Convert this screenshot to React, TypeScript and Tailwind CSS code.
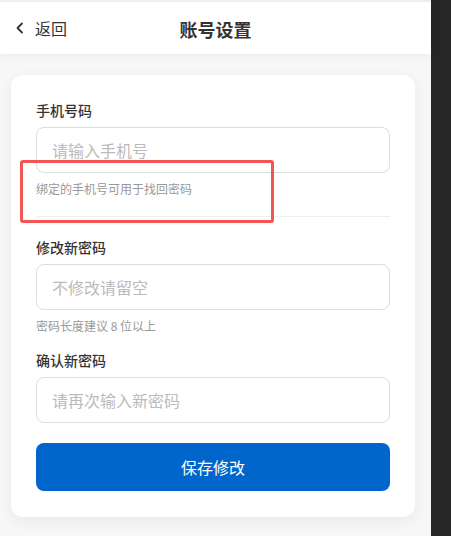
export default function App() {
    const font = { fontFamily: '"Noto Sans CJK SC", "Noto Sans", sans-serif' };

    return (
        <div className="flex h-[536px] w-[451px] overflow-hidden" style={font}>
            {/* 主区域 */}
            <div className="relative flex w-[431px] flex-col bg-[#f7f7f7]">
                {/* 顶栏 */}
                <div className="relative z-10 flex h-[54px] items-center border-t-2 border-[#eeeeee] bg-white shadow-[0_2px_8px_rgba(0,0,0,0.05)]">
                    <div className="flex items-center pl-[14px] text-[16px] text-[#333]">
                        <svg width="12" height="14" viewBox="0 0 12 14" fill="none" className="mr-[9px]">
                            <path d="M8 2.5L3.5 7L8 11.5" stroke="#333" strokeWidth="1.8" strokeLinecap="round" strokeLinejoin="round" />
                        </svg>
                        返回
                    </div>
                    <div className="absolute left-0 right-0 top-[14px] text-center text-[18px] font-bold text-[#333] pointer-events-none">
                        账号设置
                    </div>
                </div>

                {/* 表单卡片 */}
                <div className="ml-[11px] mt-[21px] w-[404px] rounded-[12px] bg-white px-[25px] pb-[26px] pt-[24px] shadow-[0_4px_16px_rgba(0,0,0,0.06)]">
                    <div className="text-[14px] font-medium leading-[22px] text-[#333]">手机号码</div>
                    <input
                        placeholder="请输入手机号"
                        className="mt-[6px] h-[46px] w-full rounded-[8px] border border-[#dddddd] px-[15px] text-[16px] placeholder:text-[#bbbbbb] outline-none"
                    />
                    <div className="mt-[7px] text-[12px] leading-[17px] text-[#999]">绑定的手机号可用于找回密码</div>
                    <div className="mt-[19px] h-px bg-[#eeeeee]" />

                    <div className="mt-[19px] text-[14px] font-medium leading-[22px] text-[#333]">修改新密码</div>
                    <input
                        placeholder="不修改请留空"
                        className="mt-[6px] h-[46px] w-full rounded-[8px] border border-[#dddddd] px-[15px] text-[16px] placeholder:text-[#bbbbbb] outline-none"
                    />
                    <div className="mt-[7px] text-[12px] leading-[17px] text-[#999]">密码长度建议 8 位以上</div>

                    <div className="mt-[15px] text-[14px] font-medium leading-[22px] text-[#333]">确认新密码</div>
                    <input
                        placeholder="请再次输入新密码"
                        className="mt-[6px] h-[46px] w-full rounded-[8px] border border-[#dddddd] px-[15px] text-[16px] placeholder:text-[#bbbbbb] outline-none"
                    />

                    <button className="mt-[20px] h-[48px] w-full rounded-[8px] bg-[#0066cc] text-[16px] font-normal text-white">
                        保存修改
                    </button>
                </div>

                {/* 标注框 */}
                <div className="absolute left-[20px] top-[160px] h-[63px] w-[254px] rounded-[3px] border-[3px] border-[#f55454]" />
            </div>

            {/* 右侧暗条 */}
            <div className="w-[20px] bg-[#262626]" />
        </div>
    );
}
